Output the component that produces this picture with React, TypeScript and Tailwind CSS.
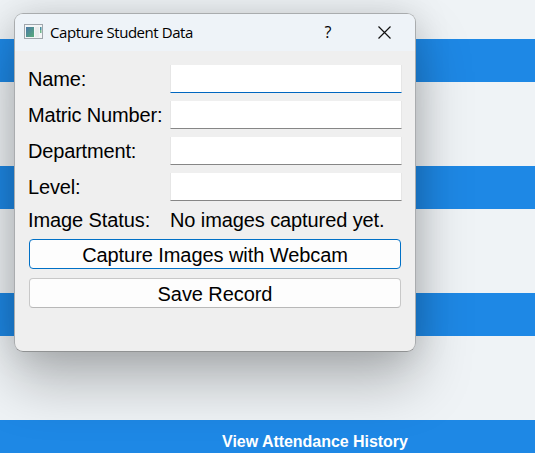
import type { ReactNode } from 'react';

const UI_FONT = "font-['Liberation_Sans',Arial,sans-serif]";

function Field({ label, active = false }: { label: string; active?: boolean }) {
  return (
    <div className="flex h-[28px] items-center">
      <label className="w-[142px] shrink-0 whitespace-nowrap pb-px text-[20px] leading-[28px] tracking-[-0.17px]">{label}</label>
      <input
        aria-label={label}
        className={`h-[28px] w-[232px] rounded-none border-x border-b border-x-[#e6e6e6] bg-white bg-clip-padding outline-none ${
          active ? 'border-b-[#0067c0]' : 'border-b-[#868686]'
        }`}
      />
    </div>
  );
}

function PushButton({ children, active = false }: { children: ReactNode; active?: boolean }) {
  return (
    <button
      className={`ml-px flex h-[30px] w-[372px] items-center justify-center rounded-[4px] border bg-[#fdfdfd] pt-[2px] text-[20px] leading-[28px] tracking-[-0.07px] ${
        active ? 'border-[#0070c6]' : 'border-[#c8c8c8] border-b-[#b8b8b8]'
      }`}
    >
      {children}
    </button>
  );
}

function AppIcon() {
  return (
    <svg width="19" height="16" viewBox="0 0 19 16">
      <defs>
        <linearGradient id="pane" x1="0" y1="0" x2="1" y2="1">
          <stop offset="0" stopColor="#4a78a8" />
          <stop offset="1" stopColor="#58ab78" />
        </linearGradient>
      </defs>
      <rect x="0.5" y="0.5" width="18" height="14" fill="#f3f5f6" stroke="#a0a6ac" />
      <rect x="2" y="3" width="8" height="10" fill="url(#pane)" />
      <rect x="11" y="3" width="4" height="10" fill="#e9ecec" />
      <rect x="16" y="3" width="1.5" height="3" fill="#4a8fa0" />
      <rect x="16" y="6" width="1.5" height="3" fill="#70b58c" />
    </svg>
  );
}

function CaptureDialog() {
  return (
    <section className="absolute left-[14px] top-[13px] h-[339px] w-[402px] overflow-hidden rounded-[9px] border border-[#a9acae] border-b-[#909293] bg-[#efefef] text-black">
      <header className="flex h-[37px] items-center bg-[#eef3f8] pb-px pl-[9px]">
        <AppIcon />
        <h1 className="ml-[7px] w-[258px] whitespace-nowrap font-['Open_Sans','Noto_Sans',sans-serif] text-[15px] leading-[20px] tracking-[-0.44px]">
          Capture Student Data
        </h1>
        <button aria-label="Help" className="flex w-[40px] justify-center font-['Open_Sans',sans-serif] text-[16px] leading-[20px]">
          ?
        </button>
        <button aria-label="Close" className="ml-[30px]">
          <svg width="13" height="13" viewBox="0 0 13 13" fill="none" stroke="#111" strokeWidth="1.2">
            <path d="M.5 .5 12.5 12.5M12.5 .5.5 12.5" />
          </svg>
        </button>
      </header>
      <div className="flex flex-col gap-[8px] pl-[13px] pt-[14px]">
        <Field label="Name:" active />
        <Field label="Matric Number:" />
        <Field label="Department:" />
        <Field label="Level:" />
      </div>
      <div className="mt-[5px] flex whitespace-nowrap pl-[13px] text-[20px] leading-[28px] tracking-[-0.1px]">
        <span className="w-[142px]">Image Status:</span>
        <span>No images captured yet.</span>
      </div>
      <div className="mt-[5px] flex flex-col gap-[9px] pl-[13px]">
        <PushButton active>Capture Images with Webcam</PushButton>
        <PushButton>Save Record</PushButton>
      </div>
    </section>
  );
}

export default function App() {
  return (
    <main className={`relative flex h-[453px] w-[535px] flex-col gap-[84px] overflow-hidden bg-[#eff3f6] pt-[39px] ${UI_FONT}`}>
      <div className="h-[43px] shrink-0 bg-[#1e88e5]" />
      <div className="h-[43px] shrink-0 bg-[#1e88e5]" />
      <div className="h-[43px] shrink-0 bg-[#1e88e5]" />
      <div className="h-[43px] shrink-0 bg-[#1e88e5] pl-[95px] text-center text-[16px] font-bold leading-[43px] tracking-[-0.04px] text-white">
        View Attendance History
      </div>
      <div className="absolute left-[14px] top-[13px] h-[339px] w-[402px] rounded-[9px] shadow-[0_30px_56px_rgba(0,0,0,0.26),0_0_36px_rgba(0,0,0,0.13)]" />
      <CaptureDialog />
    </main>
  );
}
